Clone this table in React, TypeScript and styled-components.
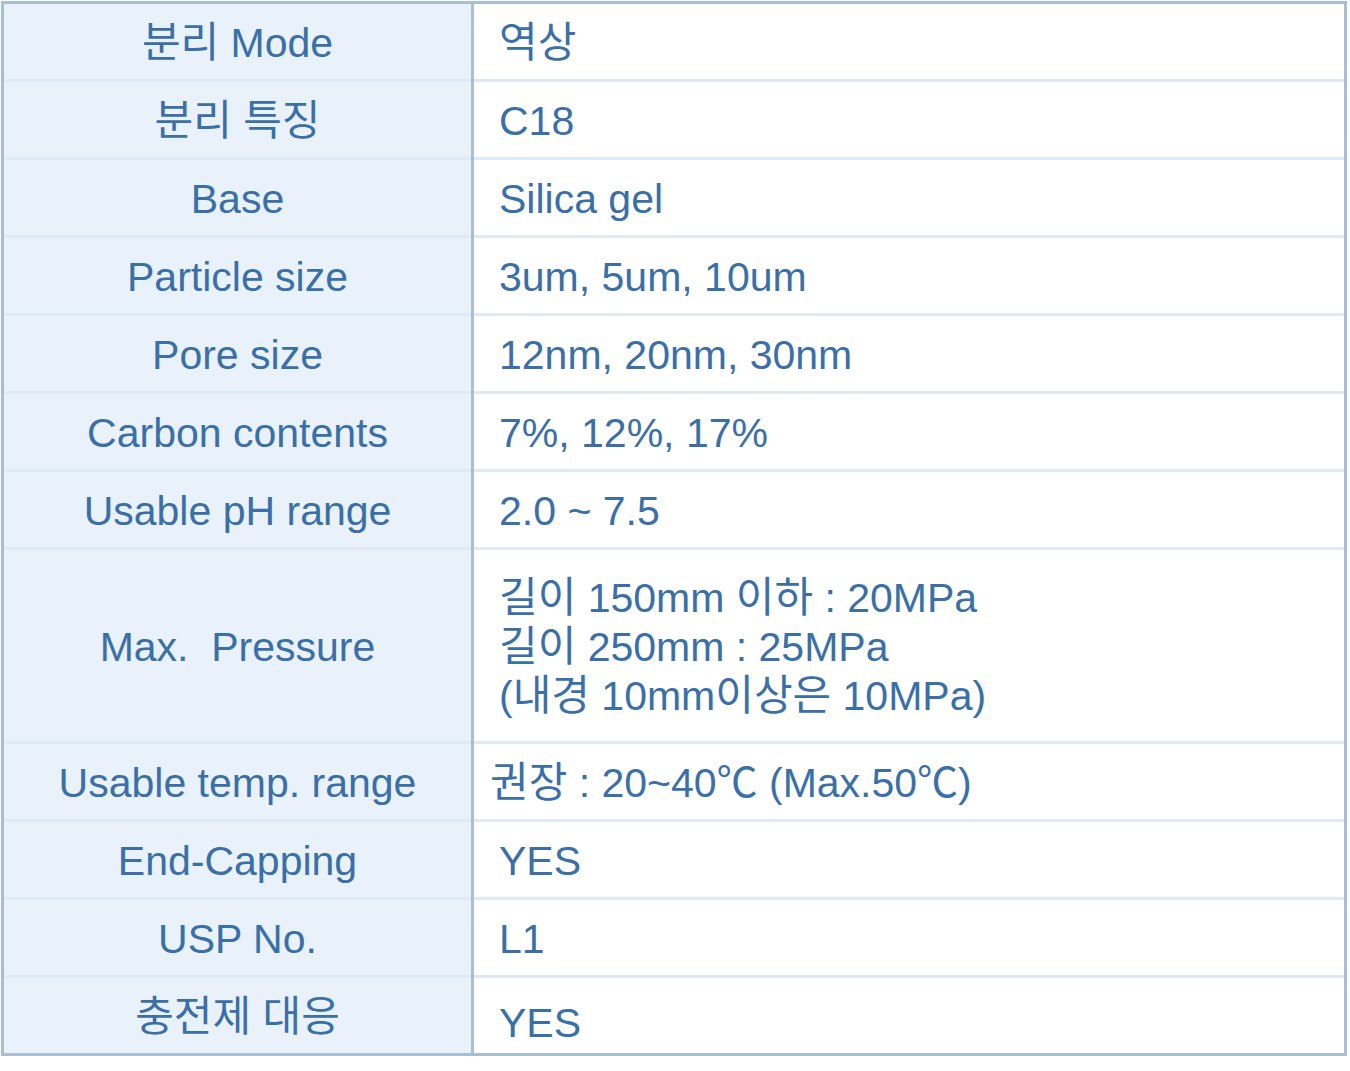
import React from "react";
import styled, { createGlobalStyle } from "styled-components";

const GlobalStyle = createGlobalStyle`
  html, body {
    margin: 0;
    padding: 0;
    background: #ffffff;
  }
  body {
    font-family: "Liberation Sans", Arial, "Noto Sans CJK KR", sans-serif;
  }
`;

const Table = styled.div`
  margin: 1px 0 0 1px;
  width: 1346px;
  box-sizing: border-box;
  border: 3px solid #a8bed4;
  display: grid;
  grid-template-columns: 467px 3px 1fr;
  background: #ffffff;
`;

const Divider = styled.div`
  background: #a9bfd4;
`;

const Cell = styled.div<{ $h: number; $last?: boolean }>`
  height: ${(p) => p.$h}px;
  box-sizing: content-box;
  border-bottom: ${(p) => (p.$last ? "none" : "3px solid #deeaf6")};
  display: flex;
  align-items: center;
  color: #3a6fa7;
  font-size: 41px;
  line-height: 49px;
  font-family: "Liberation Sans", Arial, "Noto Sans CJK KR", sans-serif;
  white-space: pre;
`;

const Label = styled(Cell)`
  background: #e9f2fa;
  justify-content: center;
  padding-top: 4px;
  height: ${(p) => p.$h - 4}px;
`;

const Value = styled(Cell)<{ $indent?: number; $shift?: number }>`
  justify-content: flex-start;
  padding-left: ${(p) => p.$indent ?? 25}px;
  padding-top: ${(p) => 4 + (p.$shift ?? 0)}px;
  height: ${(p) => p.$h - 4 - (p.$shift ?? 0)}px;
`;

const Lines = styled.div`
  display: flex;
  flex-direction: column;
`;

const Line = styled.span`
  display: block;
  height: 49px;
`;

const Ko = styled.span`
  font-size: 42px;
  line-height: 41px;
`;

function T({ text }: { text: string }) {
  const parts = text.split(/([\uAC00-\uD7A3]+)/);
  return (
    <Line>
      {parts.map((p, i) =>
        /[\uAC00-\uD7A3]/.test(p) ? <Ko key={i}>{p}</Ko> : <React.Fragment key={i}>{p}</React.Fragment>
      )}
    </Line>
  );
}

type Row = {
  label: string;
  value: string[];
  h?: number;
  indent?: number;
  shift?: number;
};

const rows: Row[] = [
  { label: "분리 Mode", value: ["역상"] },
  { label: "분리 특징", value: ["C18"] },
  { label: "Base", value: ["Silica gel"] },
  { label: "Particle size", value: ["3um, 5um, 10um"] },
  { label: "Pore size", value: ["12nm, 20nm, 30nm"] },
  { label: "Carbon contents", value: ["7%, 12%, 17%"] },
  { label: "Usable pH range", value: ["2.0 ~ 7.5"] },
  {
    label: "Max.  Pressure",
    h: 191,
    value: ["길이 150mm 이하 : 20MPa", "길이 250mm : 25MPa", "(내경 10mm이상은 10MPa)"],
  },
  { label: "Usable temp. range", value: ["권장 : 20~40℃ (Max.50℃)"], indent: 16 },
  { label: "End-Capping", value: ["YES"] },
  { label: "USP No.", value: ["L1"] },
  { label: "충전제 대응", value: ["YES"], shift: 12 },
];

export default function App() {
  return (
    <>
      <GlobalStyle />
      <Table>
        {rows.map((r, i) => {
          const h = r.h ?? 75;
          const last = i === rows.length - 1;
          return (
            <React.Fragment key={r.label}>
              <Label $h={h} $last={last}>
                <T text={r.label} />
              </Label>
              <Divider />
              <Value $h={h} $last={last} $indent={r.indent} $shift={r.shift}>
                <Lines>
                  {r.value.map((v) => (
                    <T key={v} text={v} />
                  ))}
                </Lines>
              </Value>
            </React.Fragment>
          );
        })}
      </Table>
    </>
  );
}
